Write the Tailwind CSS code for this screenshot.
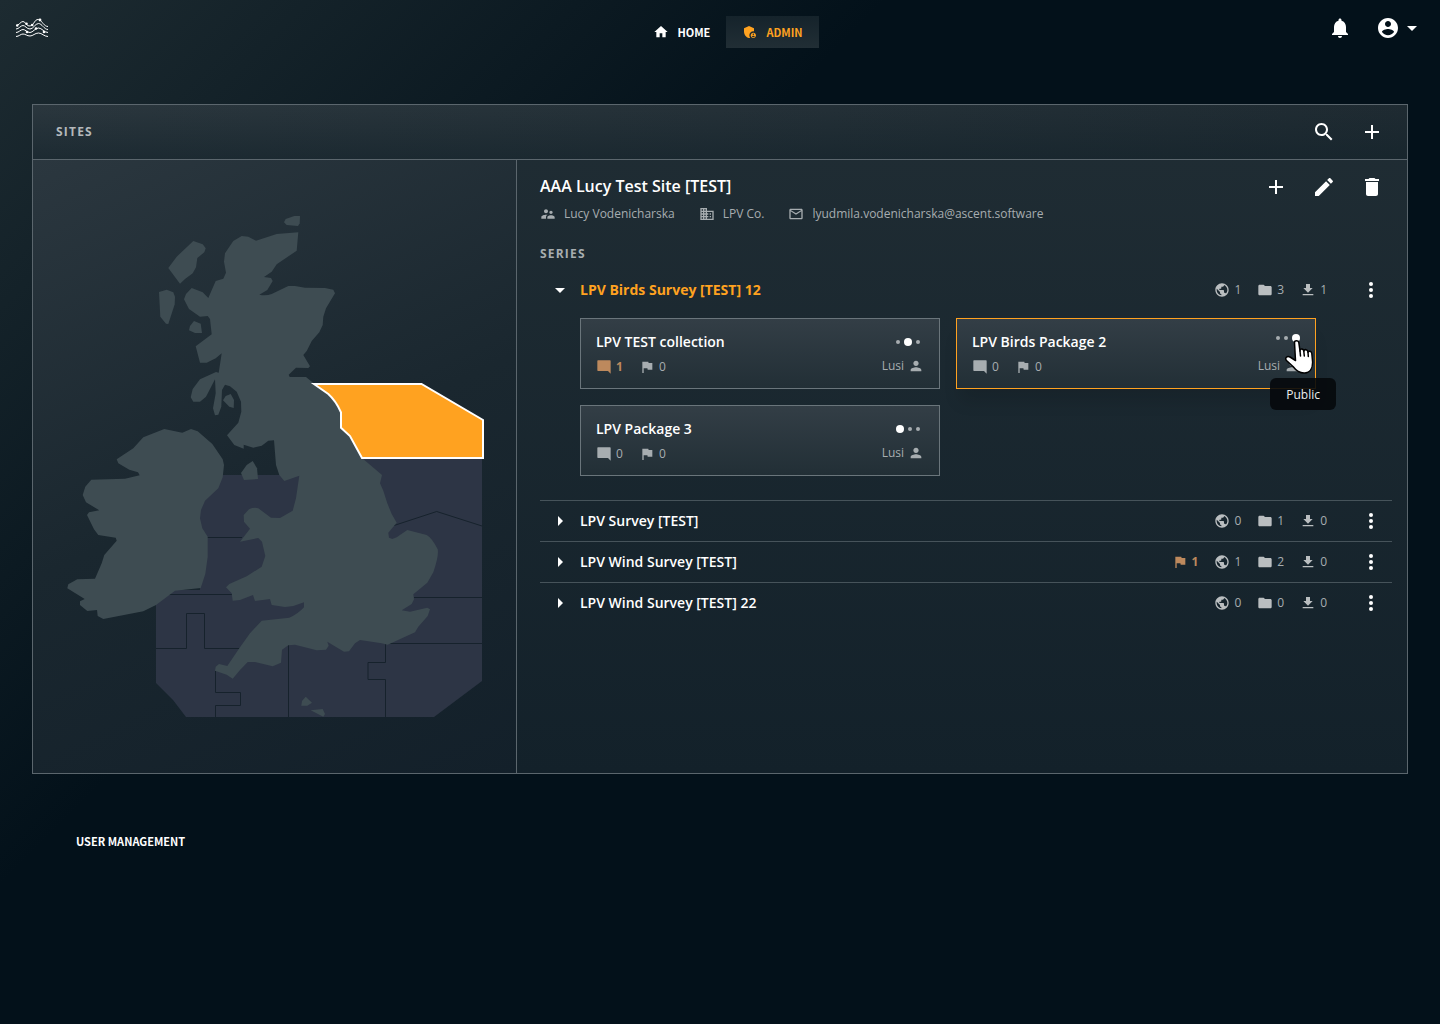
<!DOCTYPE html>
<html lang="en">

<head>
  <meta charset="UTF-8">
  <meta name="viewport" content="width=device-width, initial-scale=1.0">
  <title>Admin - Sites</title>
  <script src="https://cdn.jsdelivr.net/npm/@tailwindcss/browser@4"></script>
</head>

<body class="min-h-screen bg-[#03111a] bg-linear-[135deg,#1d2b31_0%,#03111a_36%] bg-no-repeat font-['Open_Sans',sans-serif] text-white">

  <!-- Icon set -->
  <svg class="hidden">
    <symbol id="home" viewBox="0 0 24 24"><path d="M10 20v-6h4v6h5v-8h3L12 3 2 12h3v8z"/></symbol>
    <symbol id="admin" viewBox="0 0 24 24"><path d="M17 11c.34 0 .67.04 1 .09V6.27L10.5 3 3 6.27v4.91c0 4.54 3.2 8.79 7.5 9.82.55-.13 1.08-.32 1.6-.55-.69-.98-1.1-2.17-1.1-3.45 0-3.31 2.69-6 6-6z"/><path d="M17 13c-2.21 0-4 1.79-4 4s1.79 4 4 4 4-1.79 4-4-1.79-4-4-4zm0 1.38c.62 0 1.12.51 1.12 1.12s-.51 1.12-1.12 1.12-1.12-.51-1.12-1.12.5-1.12 1.12-1.12zm0 5.37c-.93 0-1.74-.46-2.24-1.17.05-.72 1.51-1.08 2.24-1.08s2.19.36 2.24 1.08c-.5.71-1.31 1.17-2.24 1.17z"/></symbol>
    <symbol id="bell" viewBox="0 0 24 24"><path d="M12 22c1.1 0 2-.9 2-2h-4c0 1.1.89 2 2 2zm6-6v-5c0-3.07-1.64-5.64-4.5-6.32V4c0-.83-.67-1.5-1.5-1.5s-1.5.67-1.5 1.5v.68C7.63 5.36 6 7.92 6 11v5l-2 2v1h16v-1l-2-2z"/></symbol>
    <symbol id="account" viewBox="0 0 24 24"><path d="M12 2C6.48 2 2 6.48 2 12s4.48 10 10 10 10-4.48 10-10S17.52 2 12 2zm0 3c1.66 0 3 1.34 3 3s-1.34 3-3 3-3-1.34-3-3 1.34-3 3-3zm0 14.2c-2.5 0-4.71-1.28-6-3.22.03-1.99 4-3.08 6-3.08 1.99 0 5.97 1.09 6 3.08-1.29 1.94-3.5 3.22-6 3.22z"/></symbol>
    <symbol id="down" viewBox="0 0 24 24"><path d="M7 10l5 5 5-5z"/></symbol>
    <symbol id="right" viewBox="0 0 24 24"><path d="M10 17l5-5-5-5z"/></symbol>
    <symbol id="search" viewBox="0 0 24 24"><path d="M15.5 14h-.79l-.28-.27C15.41 12.59 16 11.11 16 9.5 16 5.91 13.09 3 9.5 3S3 5.91 3 9.5 5.91 16 9.5 16c1.61 0 3.09-.59 4.23-1.57l.27.28v.79l5 4.99L20.49 19l-4.99-5zm-6 0C7.01 14 5 11.99 5 9.5S7.01 5 9.5 5 14 7.01 14 9.5 11.99 14 9.5 14z"/></symbol>
    <symbol id="plus" viewBox="0 0 24 24"><path d="M19 13h-6v6h-2v-6H5v-2h6V5h2v6h6z"/></symbol>
    <symbol id="edit" viewBox="0 0 24 24"><path d="M3 17.25V21h3.75L17.81 9.94l-3.75-3.75L3 17.25zM20.71 7.04c.39-.39.39-1.02 0-1.41l-2.34-2.34c-.39-.39-1.02-.39-1.41 0l-1.83 1.83 3.75 3.75 1.83-1.83z"/></symbol>
    <symbol id="trash" viewBox="0 0 24 24"><path d="M6 19c0 1.1.9 2 2 2h8c1.1 0 2-.9 2-2V7H6v12zM19 4h-3.5l-1-1h-5l-1 1H5v2h14V4z"/></symbol>
    <symbol id="people" viewBox="0 0 24 24"><path d="M16.5 12c1.38 0 2.49-1.12 2.49-2.5S17.88 7 16.5 7 14 8.12 14 9.5s1.12 2.5 2.5 2.5zM9 11c1.66 0 2.99-1.34 2.99-3S10.66 5 9 5 6 6.34 6 8s1.34 3 3 3zm7.5 3c-1.83 0-5.5.92-5.5 2.75V19h11v-2.25c0-1.83-3.67-2.75-5.5-2.75zM9 13c-2.33 0-7 1.17-7 3.5V19h7v-2.25c0-.85.33-2.34 2.37-3.47C10.5 13.1 9.66 13 9 13z"/></symbol>
    <symbol id="company" viewBox="0 0 24 24"><path d="M12 7V3H2v18h20V7H12zM6 19H4v-2h2v2zm0-4H4v-2h2v2zm0-4H4V9h2v2zm0-4H4V5h2v2zm4 12H8v-2h2v2zm0-4H8v-2h2v2zm0-4H8V9h2v2zm0-4H8V5h2v2zm10 12h-8v-2h2v-2h-2v-2h2v-2h-2V9h8v10zm-2-8h-2v2h2v-2zm0 4h-2v2h2v-2z"/></symbol>
    <symbol id="mail" viewBox="0 0 24 24"><path d="M22 6c0-1.100-.9-2-2-2H4c-1.100 0-2 .9-2 2v12c0 1.100.9 2 2 2h16c1.100 0 2-.9 2-2V6zm-2 0l-8 5-8-5h16zm0 12H4V8l8 5 8-5v10z"/></symbol>
    <symbol id="globe" viewBox="0 0 24 24"><path d="M12 2C6.48 2 2 6.48 2 12s4.480 10 10 10 10-4.480 10-10S17.520 2 12 2zm-1 17.930c-3.950-.49-7-3.850-7-7.930 0-.62.08-1.210.21-1.790L9 15v1c0 1.100.9 2 2 2v1.930zm6.900-2.540c-.26-.81-1-1.390-1.900-1.390h-1v-3c0-.55-.45-1-1-1H8v-2h2c.55 0 1-.45 1-1V7h2c1.100 0 2-.9 2-2v-.41c2.930 1.190 5 4.060 5 7.410 0 2.080-.8 3.970-2.100 5.390z"/></symbol>
    <symbol id="folder" viewBox="0 0 24 24"><path d="M10 4H4c-1.100 0-2 .9-2 2v12c0 1.100.9 2 2 2h16c1.100 0 2-.9 2-2V8c0-1.100-.9-2-2-2h-8l-2-2z"/></symbol>
    <symbol id="download" viewBox="0 0 24 24"><path d="M19 9h-4V3H9v6H5l7 7 7-7zM4 18v2h16v-2z"/></symbol>
    <symbol id="flag" viewBox="0 0 24 24"><path d="M14.400 6L14 4H5v17h2v-7h5.600l.4 2h7V6z"/></symbol>
    <symbol id="comment" viewBox="0 0 24 24"><path d="M22 3c0-.6-.4-1-1-1H3c-.6 0-1 .4-1 1v14c0 .6.4 1 1 1h15l4 4V3z"/></symbol>
    <symbol id="person" viewBox="0 0 24 24"><path d="M12 12c2.210 0 4-1.790 4-4s-1.790-4-4-4-4 1.790-4 4 1.790 4 4 4zm0 2c-2.670 0-8 1.340-8 4v2h16v-2c0-2.660-5.330-4-8-4z"/></symbol>
    <symbol id="more" viewBox="0 0 24 24"><circle cx="12" cy="4" r="2.700"/><circle cx="12" cy="12" r="2.700"/><circle cx="12" cy="20" r="2.700"/></symbol>
  </svg>

  <header class="grid grid-cols-3 items-start px-4 pt-4">
    <a href="#" aria-label="Dashboard">
      <svg class="mt-0.5 h-5 w-8 fill-white stroke-white" viewBox="0 0 32 20">
        <g fill="none" stroke-width="1">
          <path d="M0 7.500C3 7.500 4.500 3.500 7 3.500S10.500 8 13 8s4-1.500 5.500-4S22 .8 24 2s4 6.500 8 6.500"/>
          <path d="M0 11c3 0 4.500-3.500 7-3.500s3.500 3.500 7 3.500 5-5.500 8.500-5.500S28 11.500 32 11.500"/>
          <path d="M0 14.500c3 0 4.500-3 7-3s4 3 7 3 5-4.500 8.500-4.500S28 14.500 32 14.500"/>
          <path d="M0 18.500c3 0 4.500-2.500 7-2.500s4 2 7 2 5-3 8.500-3 5.500 3.500 9.500 3.500"/>
        </g>
        <g stroke="none">
          <circle cx="1.200" cy="7.500" r="1.300"/><circle cx="10.500" cy="5.800" r="1.300"/><circle cx="16.200" cy="7" r="1.300"/>
          <circle cx="24" cy="2" r="1.400"/><circle cx="20" cy="10.500" r="1.300"/><circle cx="11" cy="14" r="1.300"/><circle cx="28" cy="14" r="1.300"/>
        </g>
      </svg>
    </a>
    <nav class="flex justify-center pl-4 font-['Noto_Sans_CJK_JP',sans-serif] text-[11px] font-bold">
      <a href="#" class="flex h-8 items-center gap-2 px-4"><svg class="size-4 fill-current"><use href="#home"/></svg>HOME</a>
      <a href="#" class="flex h-8 items-center gap-2 bg-linear-to-b from-[#15232b] to-[#212e35] px-4 text-[#ffa220]"><svg class="size-4 fill-current"><use href="#admin"/></svg>ADMIN</a>
    </nav>
    <div class="flex items-center justify-end gap-6">
      <button aria-label="Notifications"><svg class="size-6 fill-current"><use href="#bell"/></svg></button>
      <button class="flex items-center" aria-label="Account"><svg class="size-6 fill-current"><use href="#account"/></svg><svg class="size-6 fill-current"><use href="#down"/></svg></button>
    </div>
  </header>

  <main class="mx-8 mt-14 border border-[#5b666d] bg-linear-to-b from-[#202d34] to-[#13212a]">
    <div class="flex h-[55px] items-center border-b border-[#5b666d] bg-linear-to-r from-[#2b373e] to-[#1f2b32]">
      <div class="flex h-full flex-1 items-center justify-between bg-linear-to-b from-transparent to-[#13222a]/60 pr-[11px] pl-[23px]">
        <h1 class="text-xs font-bold tracking-widest text-[#b4b8bb]">SITES</h1>
        <div class="flex">
          <button class="grid size-12 place-items-center" aria-label="Search"><svg class="size-6 fill-current"><use href="#search"/></svg></button>
          <button class="grid size-12 place-items-center" aria-label="Add site"><svg class="size-6 fill-current"><use href="#plus"/></svg></button>
        </div>
      </div>
    </div>

    <div class="grid grid-cols-[484px_1fr]">
      <!-- Map -->
      <section class="border-r border-[#5b666d] bg-linear-[155deg,#2b373f_0%,#1a272f_50%,#13202a_100%]">
        <svg class="block w-full" viewBox="33 160 483 613" role="img" aria-label="Site regions">
          <path fill="#2d3545" d="M200 475H300V459H482V681L434 717H186L173 700L156 683V590H200Z"/>
          <path fill="none" stroke="#16222c" d="M200 537.500H242M160 594.500H232M156 648.500H186.500V613.500H204.500V648.500H240M215.500 671V692.500H240.500V705.500H215.500V717M288.500 645V717M385.500 644V662.500H368V679.500H385.500V717M414 597.500H482M388 643.500H482M394 525.500L436.700 511.500L482 526"/>
          <g fill="#3e4c52">
            <!-- Great Britain -->
            <path d="M298.300 232.300L296.700 250.700L276.700 264.300L271.700 271.700L264 277L271 278L272.700 281L267.300 290L259.300 294.700Q266 296 271.700 294L288.300 286H295L305 287.700L325 288L333.300 289.700L335 293.300L326 308.300L323.300 316.700L322.700 325L319.300 332.300L311.700 341L306.700 351L303.300 355L310 366.300L308.300 368L296 367.700L288.700 374.700L289.700 377H306L313.300 383L328.300 394L341.700 412.300V427.700L350 436L362 458L382 475L380 483.300L383.300 490.700L387.300 503.300L391.700 514L396.700 522.700L388.300 532.700L389 537.700L392.300 539L396.700 537.300L407.300 530L426.700 535Q432 538 437.700 549.300Q439 556 433.300 572.300L427.300 582.700L413.300 594.300L414 599.300L411.700 604L401.700 610.300L410 611.700L427.300 607.700L430 609.300L427.700 616L418.300 626.700L415 632.300L387.700 644.700L381.700 643.300L360 640L355 643.300L349 651.300L344 651.700L327.300 641.700L328.700 645.700L326 649.700L316.700 650.300L295 644.700L288.300 645.300L282 649.700L281 662.700L272.700 666.300L255 662H247.700L240 670L232.700 678.700L226.700 674.700L215 670.700L215.700 666.700L219 664L227.300 666L239.300 648.300L250 633.300L261.700 620.700L289.300 617.700Q298 614 304 607.300V602.300L293.300 606L285 607L271.700 605L270 599L255 601L253 595L240 600L232.700 600.700L231.700 593.300L226 587.300L229.300 584L246.700 576.300L261.700 566.700L265.300 556L262 541.700L258.300 538L240 541.700L250 528.700L244 521.700L243.700 515L249 509.300Q254 507 258.300 508.300L271 517.700L280 518L292.700 510.700L296 498.300L299.300 475.700L284.300 481L279.300 475L276 465L274 440.300L268.300 440.700L261.700 445.700L253.300 447.700L243.700 444.700V448.700L234.300 445L227 435.300L238.300 422.700L241.300 411.700L241 401.700L236.700 391.700L230 386.300L225 384.700L222 390L221.300 406.700L218.300 414.700L215 415.300L213 408.300L215.700 393.300L215 379.300L206 396.700L200 401.700H193.300L190.700 397.300L192.700 389L200 379.300L216 372L218.700 372.700L221.700 353.300L215.700 358.300L206.700 362.700H200L195.700 346.300L211.700 334.300L210 319L207.700 316L200 316.700L189 309L184 299.300L186 294L191.700 288L202.700 292.300L208.300 298L215.700 281L223.300 278.700L226 272.700L224 261.700L225 253.300L233.300 241L241.700 236L248.300 236.700L256 240.700L276.700 234Z"/>
            <!-- Ireland -->
            <path d="M164.300 429L182.300 432.700L191 429L197.700 431.300L212.300 444L222.700 459.300L224 465L222.700 477.300L218.300 488.300L205 500.700L201 510L200 518.300L202.300 528.300L207.700 536.700V556.700L205.300 574L200.700 588L175 590.700L156 605L143.300 611.300L103.300 619L97.700 616L97 610L87.300 611L80 605V601.300L84.700 599L67.300 588.300L68.300 584.300L77.300 579.300L95 578.700L101.700 563.300L104.300 555L116.700 540.700L115.700 537.700L98.300 535L94 529.300L87 515L89 512.300L99.300 510.300L86 502.300L82.700 495L85.300 486.700L91.300 479.700L125 478.700L139.700 475.300L138 472.300L129.300 469.700L118.300 463.300L116.700 459.300L133.300 448.300L143.300 437.300Z"/>
            <!-- Islands -->
            <path d="M193.300 241L202.700 244.300L205.700 248.300L204.300 252.300L197.300 258L196 267.300L192.700 273.300L185 279L180 283.700L168.300 268L176.700 256.700Z"/>
            <path d="M159 292L166.700 289.700L173.300 292.300L175 296.700L174.700 304.300L168.300 324L166 323.700L160.300 316.700Z"/>
            <path d="M284 222.300L285.700 219L294.300 216H300L299.700 223.300L298 226L286.700 225Z"/>
            <path d="M194 321L200.700 323.700L202 333H195L189 330.300L190 326Z"/>
            <path d="M230.700 394L234 400L233.700 408L229.300 406.700L223 400.300L225.700 396Z"/>
            <path d="M252.700 461L257 468.300L258 479L244 480L241 473L246.700 465Z"/>
            <path d="M305.700 696.700L312 702.700L307.300 705.700H301.300L302 701ZM310.700 710.300L322.700 709L325 714L323.300 716.700Z"/>
          </g>
          <path fill="#ffa220" stroke="#fff" stroke-width="2" d="M314 384H421.500L483 420V458H362L350 436L341 427.700V412.300Q336 401 328.300 394Z"/>
        </svg>
      </section>

      <!-- Selected site -->
      <section class="pr-[15px] pl-[23px]">
        <div class="-mr-1 flex items-start justify-between">
          <div class="pt-[15px]">
            <h2 class="text-base leading-[22px] font-semibold">AAA Lucy Test Site [TEST]</h2>
            <ul class="mt-[7px] flex gap-6 text-xs leading-5 text-[#a7adb0]">
              <li class="flex items-center gap-2"><svg class="size-4 fill-current"><use href="#people"/></svg>Lucy Vodenicharska</li>
              <li class="flex items-center gap-2"><svg class="size-4 fill-current"><use href="#company"/></svg>LPV Co.</li>
              <li class="flex items-center gap-2"><svg class="size-4 fill-current"><use href="#mail"/></svg>lyudmila.vodenicharska@ascent.software</li>
            </ul>
          </div>
          <div class="flex pt-[3px]">
            <button class="grid size-12 place-items-center" aria-label="Add series"><svg class="size-6 fill-current"><use href="#plus"/></svg></button>
            <button class="grid size-12 place-items-center" aria-label="Edit site"><svg class="size-6 fill-current"><use href="#edit"/></svg></button>
            <button class="grid size-12 place-items-center" aria-label="Delete site"><svg class="size-6 fill-current"><use href="#trash"/></svg></button>
          </div>
        </div>

        <h3 class="mt-5 text-xs leading-5 font-bold tracking-widest text-[#a7adb0]">SERIES</h3>

        <div class="mt-1.5 divide-y divide-[#46535a]">
          <div class="pb-6">
            <div class="flex h-10 items-center">
              <button class="flex flex-1 items-center text-sm font-bold text-[#ffa220]"><svg class="mr-2 ml-2 size-6 fill-white"><use href="#down"/></svg>LPV Birds Survey [TEST] 12</button>
              <ul class="flex gap-4 text-xs text-[#a7adb0]">
                <li class="flex items-center gap-1"><svg class="size-4 fill-[#babec0]"><use href="#globe"/></svg>1</li>
                <li class="flex items-center gap-1"><svg class="size-4 fill-[#babec0]"><use href="#folder"/></svg>3</li>
                <li class="flex items-center gap-1"><svg class="size-4 fill-[#babec0]"><use href="#download"/></svg>1</li>
              </ul>
              <button class="ml-[23px] grid h-10 w-[42px] place-items-center" aria-label="More"><svg class="size-[18px] fill-white"><use href="#more"/></svg></button>
            </div>
            <div class="mt-2 ml-10 grid grid-cols-[repeat(auto-fill,360px)] gap-4">
              <article class="flex h-[71px] justify-between border border-[#6a757b] bg-linear-to-b from-[#333e46] to-[#222f36] px-[15px] pt-3">
                <div>
                  <h4 class="text-sm leading-[22px] font-semibold">LPV TEST collection</h4>
                  <ul class="mt-1 flex gap-4 text-xs leading-5 text-[#a7adb0]">
                    <li class="flex items-center gap-1 font-bold text-[#bd895d]"><svg class="size-4 fill-current"><use href="#comment"/></svg>1</li>
                    <li class="flex items-center gap-1"><svg class="size-4 fill-current"><use href="#flag"/></svg>0</li>
                  </ul>
                </div>
                <div class="flex flex-col items-end">
                  <div class="mr-1 flex h-[22px] items-center gap-1"><i class="size-1 rounded-full bg-[#a7adb0]"></i><i class="size-2 rounded-full bg-white"></i><i class="size-1 rounded-full bg-[#a7adb0]"></i></div>
                  <p class="mt-[3px] flex items-center gap-1 text-xs leading-5 text-[#a7adb0]">Lusi<svg class="size-4 fill-current"><use href="#person"/></svg></p>
                </div>
              </article>

              <article class="relative flex h-[71px] justify-between border border-[#ffa220] bg-linear-to-b from-[#333e46] to-[#222f36] px-[15px] pt-3 shadow-[0_16px_16px_-4px_rgba(0,0,0,0.12)]">
                <div>
                  <h4 class="text-sm leading-[22px] font-semibold">LPV Birds Package 2</h4>
                  <ul class="mt-1 flex gap-4 text-xs leading-5 text-[#a7adb0]">
                    <li class="flex items-center gap-1"><svg class="size-4 fill-current"><use href="#comment"/></svg>0</li>
                    <li class="flex items-center gap-1"><svg class="size-4 fill-current"><use href="#flag"/></svg>0</li>
                  </ul>
                </div>
                <div class="flex flex-col items-end">
                  <div class="mb-2 flex h-3.5 items-center gap-1"><i class="size-1 rounded-full bg-[#a7adb0]"></i><i class="size-1 rounded-full bg-[#a7adb0]"></i><i class="size-2 rounded-full bg-white"></i></div>
                  <p class="mt-[3px] flex items-center gap-1 text-xs leading-5 text-[#a7adb0]">Lusi<svg class="size-4 fill-current"><use href="#person"/></svg></p>
                </div>
                <div class="absolute top-[59px] -right-[21px] rounded-md bg-[#05090c]/90 px-4 pt-[7px] pb-[5px] text-xs leading-5 text-[#eceeee]" role="tooltip">Public</div>
                <!-- Pointer -->
                <svg class="absolute top-[19px] right-0 h-9 w-8 fill-white stroke-black" viewBox="0 0 32 36" stroke-width="1.500" stroke-linejoin="round" stroke-linecap="round">
                  <path d="M11.500 4.500C11.500 2.200 15.500 2.200 15.800 4.500L17 13C17 10.200 20.600 10.400 20.800 13.200C21.300 10.800 24.800 11.200 25 14.200C25.800 12.600 28.400 13 28.800 15.500L29.600 24C29.700 30 27 34.500 22 35C16 35.500 13 32.500 10 28.500L3.500 22.500C1.500 20 4 17.500 7 19L12.500 22.500Z"/>
                  <path fill="none" d="M17 13L17.500 18M20.800 13.200L21.300 18M25 14.200L25.300 18.500"/>
                </svg>
              </article>

              <article class="flex h-[71px] justify-between border border-[#6a757b] bg-linear-to-b from-[#333e46] to-[#222f36] px-[15px] pt-3">
                <div>
                  <h4 class="text-sm leading-[22px] font-semibold">LPV Package 3</h4>
                  <ul class="mt-1 flex gap-4 text-xs leading-5 text-[#a7adb0]">
                    <li class="flex items-center gap-1"><svg class="size-4 fill-current"><use href="#comment"/></svg>0</li>
                    <li class="flex items-center gap-1"><svg class="size-4 fill-current"><use href="#flag"/></svg>0</li>
                  </ul>
                </div>
                <div class="flex flex-col items-end">
                  <div class="mr-1 flex h-[22px] items-center gap-1"><i class="size-2 rounded-full bg-white"></i><i class="size-1 rounded-full bg-[#a7adb0]"></i><i class="size-1 rounded-full bg-[#a7adb0]"></i></div>
                  <p class="mt-[3px] flex items-center gap-1 text-xs leading-5 text-[#a7adb0]">Lusi<svg class="size-4 fill-current"><use href="#person"/></svg></p>
                </div>
              </article>
            </div>
          </div>

          <div class="flex items-center">
            <button class="flex flex-1 items-center text-sm font-semibold"><svg class="mr-2 ml-2 size-6 fill-white"><use href="#right"/></svg>LPV Survey [TEST]</button>
            <ul class="flex gap-4 text-xs text-[#a7adb0]">
              <li class="flex items-center gap-1"><svg class="size-4 fill-[#babec0]"><use href="#globe"/></svg>0</li>
              <li class="flex items-center gap-1"><svg class="size-4 fill-[#babec0]"><use href="#folder"/></svg>1</li>
              <li class="flex items-center gap-1"><svg class="size-4 fill-[#babec0]"><use href="#download"/></svg>0</li>
            </ul>
            <button class="ml-[23px] grid h-10 w-[42px] place-items-center" aria-label="More"><svg class="size-[18px] fill-white"><use href="#more"/></svg></button>
          </div>

          <div class="flex items-center">
            <button class="flex flex-1 items-center text-sm font-semibold"><svg class="mr-2 ml-2 size-6 fill-white"><use href="#right"/></svg>LPV Wind Survey [TEST]</button>
            <ul class="flex gap-4 text-xs text-[#a7adb0]">
              <li class="flex items-center gap-1 font-bold text-[#bd895d]"><svg class="size-4 fill-current"><use href="#flag"/></svg>1</li>
              <li class="flex items-center gap-1"><svg class="size-4 fill-[#babec0]"><use href="#globe"/></svg>1</li>
              <li class="flex items-center gap-1"><svg class="size-4 fill-[#babec0]"><use href="#folder"/></svg>2</li>
              <li class="flex items-center gap-1"><svg class="size-4 fill-[#babec0]"><use href="#download"/></svg>0</li>
            </ul>
            <button class="ml-[23px] grid h-10 w-[42px] place-items-center" aria-label="More"><svg class="size-[18px] fill-white"><use href="#more"/></svg></button>
          </div>

          <div class="flex items-center">
            <button class="flex flex-1 items-center text-sm font-semibold"><svg class="mr-2 ml-2 size-6 fill-white"><use href="#right"/></svg>LPV Wind Survey [TEST] 22</button>
            <ul class="flex gap-4 text-xs text-[#a7adb0]">
              <li class="flex items-center gap-1"><svg class="size-4 fill-[#babec0]"><use href="#globe"/></svg>0</li>
              <li class="flex items-center gap-1"><svg class="size-4 fill-[#babec0]"><use href="#folder"/></svg>0</li>
              <li class="flex items-center gap-1"><svg class="size-4 fill-[#babec0]"><use href="#download"/></svg>0</li>
            </ul>
            <button class="ml-[23px] grid h-10 w-[42px] place-items-center" aria-label="More"><svg class="size-[18px] fill-white"><use href="#more"/></svg></button>
          </div>
        </div>
      </section>
    </div>
  </main>

  <button class="mt-[51px] ml-[60px] h-8 px-4 font-['Noto_Sans_CJK_JP',sans-serif] text-[11px] font-bold">USER MANAGEMENT</button>

</body>

</html>
